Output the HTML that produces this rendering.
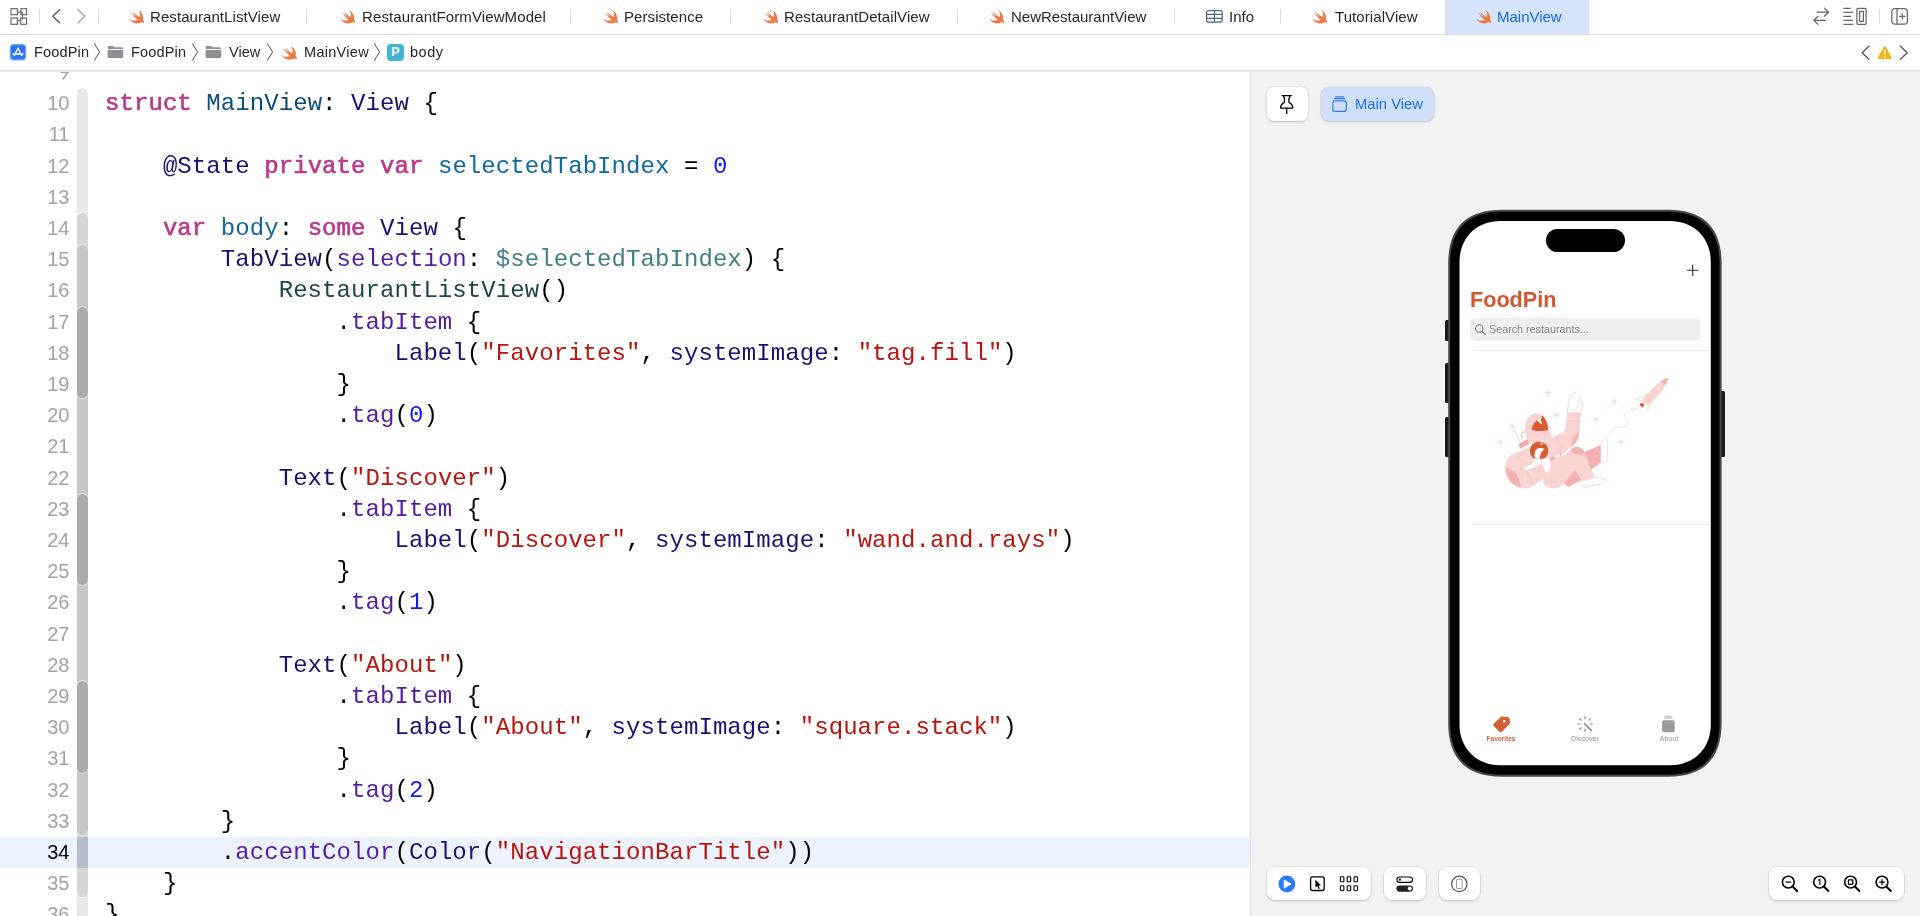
<!DOCTYPE html>
<html>
<head>
<meta charset="utf-8">
<title>Xcode</title>
<style>
*{box-sizing:border-box;margin:0;padding:0}
html,body{width:1920px;height:916px;overflow:hidden;background:#fff;font-family:"Liberation Sans",sans-serif;}
body{position:relative}
.abs{position:absolute}
/* top tab bar */
#tabbar{position:absolute;left:0;top:0;width:1920px;height:34px;background:#fff}
#tabline{position:absolute;left:0;top:34px;width:1920px;height:1px;background:#dcdcdc}
.tab{position:absolute;top:0;height:34px;font-size:15px;line-height:33px;color:#262626;white-space:nowrap}
.tsep{position:absolute;top:9px;width:1px;height:15px;background:#dadada}
.swift{position:absolute;top:9px;width:16px;height:15px}
/* breadcrumb */
#crumb{position:absolute;left:0;top:35px;width:1920px;height:35px;background:#fff}
#crumbline{position:absolute;left:0;top:70px;width:1920px;height:2px;background:linear-gradient(#dedede,#efefef);z-index:3}
.ct{position:absolute;top:35px;height:35px;line-height:35px;font-size:14.5px;color:#262626;white-space:nowrap}
/* editor */
#editor{position:absolute;left:0;top:71px;width:1250px;height:845px;background:#fff;overflow:hidden}
.ln{position:absolute;left:0;width:69.5px;text-align:right;font-size:20px;color:#a3a3a3;height:31.2px;line-height:31.2px;white-space:pre}
.cl{position:absolute;left:105.4px;font-family:"Liberation Mono",monospace;font-size:24px;letter-spacing:0.07px;height:31.2px;line-height:31.2px;white-space:pre;color:#000}
.k{color:#b8388a;-webkit-text-stroke:0.6px #b8388a}
.td{color:#0b4f79}
.ot{color:#1b1270}
.of{color:#561ca0}
.od{color:#0f68a0}
.pv{color:#3e8087}
.pc{color:#1c464a}
.s{color:#b5150d}
.n{color:#1818f2}
#hl{position:absolute;left:0;top:766px;width:1250px;height:31px;background:rgba(40,110,240,0.085)}
.rb{position:absolute;left:77px;width:11px;border-radius:5.5px}
/* preview */
#preview{position:absolute;left:1250px;top:71px;width:670px;height:845px;background:#f2f2f2;border-left:1px solid #e0e0e0}
.btn{position:absolute;background:#fff;border-radius:7px;box-shadow:0 0 0 0.5px rgba(0,0,0,.08),0 1px 2.5px rgba(0,0,0,.18)}
.tl{top:733.2px;height:11px;line-height:11px;font-size:7.2px;text-align:center;white-space:nowrap}
.tab,.ct,.cl,.ln,.tl,#mv,#ttl,#srch{will-change:transform}
</style>
</head>
<body>
<div id="tabbar">
<div class="abs" style="left:1445px;top:0;width:144px;height:34px;background:#d5e4fb"></div>
<svg class="abs" style="left:129.3px;top:9.5px" width="15.5" height="14" viewBox="2.3 3.3 18.6 16.9" preserveAspectRatio="none"><defs><linearGradient id="sg" x1="0" y1="0" x2="0" y2="1"><stop offset="0" stop-color="#f58a3c"/><stop offset="1" stop-color="#ee5a35"/></linearGradient></defs><path fill="#f07642" d="M13.543 3.41c4.114 2.47 6.545 7.162 5.549 11.131-.024.093-.05.181-.076.272l.002.001c2.062 2.538 1.5 5.258 1.236 4.745-1.072-2.086-3.066-1.568-4.088-1.043a6.803 6.803 0 0 1-.281.158l-.02.012-.002.002c-2.115 1.123-4.957 1.205-7.812-.022a12.568 12.568 0 0 1-5.64-4.838c.649.48 1.35.902 2.097 1.252 3.019 1.414 6.051 1.311 8.197-.002C9.651 12.73 7.101 9.67 5.146 7.191a10.628 10.628 0 0 1-1.005-1.384c2.34 2.142 6.038 4.83 7.365 5.576C8.69 8.408 6.208 4.743 6.324 4.86c4.436 4.47 8.528 6.996 8.528 6.996.154.085.27.154.36.213.085-.215.16-.437.224-.668.708-2.588-.09-5.548-1.893-7.992z"/></svg>
<div class="tab" style="left:150px;letter-spacing:0.074px">RestaurantListView</div>
<svg class="abs" style="left:340px;top:9.5px" width="15.5" height="14" viewBox="2.3 3.3 18.6 16.9" preserveAspectRatio="none"><defs><linearGradient id="sg" x1="0" y1="0" x2="0" y2="1"><stop offset="0" stop-color="#f58a3c"/><stop offset="1" stop-color="#ee5a35"/></linearGradient></defs><path fill="#f07642" d="M13.543 3.41c4.114 2.47 6.545 7.162 5.549 11.131-.024.093-.05.181-.076.272l.002.001c2.062 2.538 1.5 5.258 1.236 4.745-1.072-2.086-3.066-1.568-4.088-1.043a6.803 6.803 0 0 1-.281.158l-.02.012-.002.002c-2.115 1.123-4.957 1.205-7.812-.022a12.568 12.568 0 0 1-5.64-4.838c.649.48 1.35.902 2.097 1.252 3.019 1.414 6.051 1.311 8.197-.002C9.651 12.73 7.101 9.67 5.146 7.191a10.628 10.628 0 0 1-1.005-1.384c2.34 2.142 6.038 4.83 7.365 5.576C8.69 8.408 6.208 4.743 6.324 4.86c4.436 4.47 8.528 6.996 8.528 6.996.154.085.27.154.36.213.085-.215.16-.437.224-.668.708-2.588-.09-5.548-1.893-7.992z"/></svg>
<div class="tab" style="left:361.6px;letter-spacing:0.110px">RestaurantFormViewModel</div>
<svg class="abs" style="left:603.3px;top:9.5px" width="15.5" height="14" viewBox="2.3 3.3 18.6 16.9" preserveAspectRatio="none"><defs><linearGradient id="sg" x1="0" y1="0" x2="0" y2="1"><stop offset="0" stop-color="#f58a3c"/><stop offset="1" stop-color="#ee5a35"/></linearGradient></defs><path fill="#f07642" d="M13.543 3.41c4.114 2.47 6.545 7.162 5.549 11.131-.024.093-.05.181-.076.272l.002.001c2.062 2.538 1.5 5.258 1.236 4.745-1.072-2.086-3.066-1.568-4.088-1.043a6.803 6.803 0 0 1-.281.158l-.02.012-.002.002c-2.115 1.123-4.957 1.205-7.812-.022a12.568 12.568 0 0 1-5.64-4.838c.649.48 1.35.902 2.097 1.252 3.019 1.414 6.051 1.311 8.197-.002C9.651 12.73 7.101 9.67 5.146 7.191a10.628 10.628 0 0 1-1.005-1.384c2.34 2.142 6.038 4.83 7.365 5.576C8.69 8.408 6.208 4.743 6.324 4.86c4.436 4.47 8.528 6.996 8.528 6.996.154.085.27.154.36.213.085-.215.16-.437.224-.668.708-2.588-.09-5.548-1.893-7.992z"/></svg>
<div class="tab" style="left:624px;letter-spacing:0.075px">Persistence</div>
<svg class="abs" style="left:762.7px;top:9.5px" width="15.5" height="14" viewBox="2.3 3.3 18.6 16.9" preserveAspectRatio="none"><defs><linearGradient id="sg" x1="0" y1="0" x2="0" y2="1"><stop offset="0" stop-color="#f58a3c"/><stop offset="1" stop-color="#ee5a35"/></linearGradient></defs><path fill="#f07642" d="M13.543 3.41c4.114 2.47 6.545 7.162 5.549 11.131-.024.093-.05.181-.076.272l.002.001c2.062 2.538 1.5 5.258 1.236 4.745-1.072-2.086-3.066-1.568-4.088-1.043a6.803 6.803 0 0 1-.281.158l-.02.012-.002.002c-2.115 1.123-4.957 1.205-7.812-.022a12.568 12.568 0 0 1-5.64-4.838c.649.48 1.35.902 2.097 1.252 3.019 1.414 6.051 1.311 8.197-.002C9.651 12.73 7.101 9.67 5.146 7.191a10.628 10.628 0 0 1-1.005-1.384c2.34 2.142 6.038 4.83 7.365 5.576C8.69 8.408 6.208 4.743 6.324 4.86c4.436 4.47 8.528 6.996 8.528 6.996.154.085.27.154.36.213.085-.215.16-.437.224-.668.708-2.588-.09-5.548-1.893-7.992z"/></svg>
<div class="tab" style="left:784px;letter-spacing:0.086px">RestaurantDetailView</div>
<svg class="abs" style="left:989px;top:9.5px" width="15.5" height="14" viewBox="2.3 3.3 18.6 16.9" preserveAspectRatio="none"><defs><linearGradient id="sg" x1="0" y1="0" x2="0" y2="1"><stop offset="0" stop-color="#f58a3c"/><stop offset="1" stop-color="#ee5a35"/></linearGradient></defs><path fill="#f07642" d="M13.543 3.41c4.114 2.47 6.545 7.162 5.549 11.131-.024.093-.05.181-.076.272l.002.001c2.062 2.538 1.5 5.258 1.236 4.745-1.072-2.086-3.066-1.568-4.088-1.043a6.803 6.803 0 0 1-.281.158l-.02.012-.002.002c-2.115 1.123-4.957 1.205-7.812-.022a12.568 12.568 0 0 1-5.64-4.838c.649.48 1.35.902 2.097 1.252 3.019 1.414 6.051 1.311 8.197-.002C9.651 12.73 7.101 9.67 5.146 7.191a10.628 10.628 0 0 1-1.005-1.384c2.34 2.142 6.038 4.83 7.365 5.576C8.69 8.408 6.208 4.743 6.324 4.86c4.436 4.47 8.528 6.996 8.528 6.996.154.085.27.154.36.213.085-.215.16-.437.224-.668.708-2.588-.09-5.548-1.893-7.992z"/></svg>
<div class="tab" style="left:1010.5px;letter-spacing:-0.019px">NewRestaurantView</div>
<div class="tab" style="left:1229px;letter-spacing:0.042px">Info</div>
<svg class="abs" style="left:1312.3px;top:9.5px" width="15.5" height="14" viewBox="2.3 3.3 18.6 16.9" preserveAspectRatio="none"><defs><linearGradient id="sg" x1="0" y1="0" x2="0" y2="1"><stop offset="0" stop-color="#f58a3c"/><stop offset="1" stop-color="#ee5a35"/></linearGradient></defs><path fill="#f07642" d="M13.543 3.41c4.114 2.47 6.545 7.162 5.549 11.131-.024.093-.05.181-.076.272l.002.001c2.062 2.538 1.5 5.258 1.236 4.745-1.072-2.086-3.066-1.568-4.088-1.043a6.803 6.803 0 0 1-.281.158l-.02.012-.002.002c-2.115 1.123-4.957 1.205-7.812-.022a12.568 12.568 0 0 1-5.64-4.838c.649.48 1.35.902 2.097 1.252 3.019 1.414 6.051 1.311 8.197-.002C9.651 12.73 7.101 9.67 5.146 7.191a10.628 10.628 0 0 1-1.005-1.384c2.34 2.142 6.038 4.83 7.365 5.576C8.69 8.408 6.208 4.743 6.324 4.86c4.436 4.47 8.528 6.996 8.528 6.996.154.085.27.154.36.213.085-.215.16-.437.224-.668.708-2.588-.09-5.548-1.893-7.992z"/></svg>
<div class="tab" style="left:1335px;letter-spacing:0.083px">TutorialView</div>
<svg class="abs" style="left:1476px;top:9.5px" width="15.5" height="14" viewBox="2.3 3.3 18.6 16.9" preserveAspectRatio="none"><defs><linearGradient id="sg" x1="0" y1="0" x2="0" y2="1"><stop offset="0" stop-color="#f58a3c"/><stop offset="1" stop-color="#ee5a35"/></linearGradient></defs><path fill="#f07642" d="M13.543 3.41c4.114 2.47 6.545 7.162 5.549 11.131-.024.093-.05.181-.076.272l.002.001c2.062 2.538 1.5 5.258 1.236 4.745-1.072-2.086-3.066-1.568-4.088-1.043a6.803 6.803 0 0 1-.281.158l-.02.012-.002.002c-2.115 1.123-4.957 1.205-7.812-.022a12.568 12.568 0 0 1-5.64-4.838c.649.48 1.35.902 2.097 1.252 3.019 1.414 6.051 1.311 8.197-.002C9.651 12.73 7.101 9.67 5.146 7.191a10.628 10.628 0 0 1-1.005-1.384c2.34 2.142 6.038 4.83 7.365 5.576C8.69 8.408 6.208 4.743 6.324 4.86c4.436 4.47 8.528 6.996 8.528 6.996.154.085.27.154.36.213.085-.215.16-.437.224-.668.708-2.588-.09-5.548-1.893-7.992z"/></svg>
<div class="tab" style="left:1497px;letter-spacing:-0.009px;color:#1767e0">MainView</div>
<div class="tsep" style="left:39.0px"></div>
<div class="tsep" style="left:97.9px"></div>
<div class="tsep" style="left:306.2px"></div>
<div class="tsep" style="left:570.2px"></div>
<div class="tsep" style="left:730.2px"></div>
<div class="tsep" style="left:956.5px"></div>
<div class="tsep" style="left:1174.2px"></div>
<div class="tsep" style="left:1279.5px"></div>
<div class="tsep" style="left:1878.5px"></div>
<svg class="abs" style="left:9px;top:7px" width="20" height="20" viewBox="9 7 20 20" fill="none" stroke="#6a6a6a" stroke-width="1.2"><rect x="11" y="8.7" width="6.4" height="6"/><rect x="20.8" y="8.7" width="5.7" height="6"/><rect x="11" y="18" width="6.4" height="6.3"/><rect x="20.8" y="18" width="5.7" height="6.3"/><path d="M17.4 12.2H22.5M22.5 12.2V19.5M17.4 20.3H20.8"/></svg>
<svg class="abs" style="left:50px;top:7px" width="40" height="20" viewBox="50 7 40 20" fill="none" stroke-width="1.5" stroke-linecap="round" stroke-linejoin="round"><path stroke="#5e5e5e" d="M59.6 9.8L52.8 16.2L59.6 22.7"/><path stroke="#a8a8a8" d="M78 9.8L84.8 16.2L78 22.7"/></svg>
<svg class="abs" style="left:1205px;top:8px" width="19" height="17" viewBox="1205 8 19 17" fill="none" stroke="#56657a" stroke-width="1.2"><rect x="1206.6" y="10.6" width="15.6" height="11.6" rx="2"/><path d="M1206.6 14.4H1222.2M1206.6 18.3H1222.2M1214.4 10.6V22.2"/></svg>
<svg class="abs" style="left:1810px;top:5px" width="104" height="24" viewBox="1810 5 104 24" fill="none" stroke="#666" stroke-width="1.25" stroke-linecap="round" stroke-linejoin="round">
<path d="M1817 12.2H1828.4M1824.3 8.1L1828.6 12.2L1824.3 16.3M1825.3 20.3H1814M1818 16.2L1813.8 20.3L1818 24.4"/>
<path d="M1843.4 8.4H1850.6M1843.4 12.3H1853.2M1843.4 16.4H1851M1843.4 20.4H1853.2M1843.4 24.3H1853.2" stroke-linecap="butt"/>
<rect x="1856.9" y="8.4" width="9.2" height="15.9" rx="1"/><rect x="1859.6" y="11.3" width="3.8" height="10" />
<rect x="1891.8" y="8.5" width="15.6" height="15.6" rx="3.2"/><path d="M1897 8.5V24.1M1899.6 16.4H1905M1902.3 13.7V19.1"/></svg>
</div>
<div id="tabline"></div>
<div id="crumb"></div>
<div id="crumbline"></div>
<!--CRUMB-->
<svg class="abs" style="left:9px;top:43px" width="18" height="18" viewBox="0 0 18 18"><rect x="0.8" y="1" width="16.4" height="16.4" rx="3.8" fill="#74a6ff"/><rect x="2" y="2.2" width="14" height="14" rx="2.6" fill="#2a74f2"/><g stroke="#fff" stroke-width="1.3" stroke-linecap="round" fill="none"><path d="M9 5.2L5.2 12.6M9 5.2L12.8 12.6M4 11H14"/></g></svg>
<div class="ct" style="left:33.8px;letter-spacing:0.169px">FoodPin</div>
<div class="ct" style="left:130.8px;letter-spacing:0.169px">FoodPin</div>
<div class="ct" style="left:229px;letter-spacing:0.007px">View</div>
<div class="ct" style="left:303.6px;letter-spacing:0.299px">MainView</div>
<div class="ct" style="left:410px;letter-spacing:0.538px">body</div>
<svg class="abs" style="left:93px;top:42px" width="9" height="20" viewBox="0 0 9 20" fill="none" stroke="#4c4c4c" stroke-width="1"><path d="M1.2 1.4L6.6 10L1.2 18.6"/></svg>
<svg class="abs" style="left:191px;top:42px" width="9" height="20" viewBox="0 0 9 20" fill="none" stroke="#4c4c4c" stroke-width="1"><path d="M1.2 1.4L6.6 10L1.2 18.6"/></svg>
<svg class="abs" style="left:266px;top:42px" width="9" height="20" viewBox="0 0 9 20" fill="none" stroke="#4c4c4c" stroke-width="1"><path d="M1.2 1.4L6.6 10L1.2 18.6"/></svg>
<svg class="abs" style="left:373px;top:42px" width="9" height="20" viewBox="0 0 9 20" fill="none" stroke="#4c4c4c" stroke-width="1"><path d="M1.2 1.4L6.6 10L1.2 18.6"/></svg>
<svg class="abs" style="left:107.3px;top:45px" width="17" height="14" viewBox="0 0 17 14"><path fill="#8c9095" d="M0.6 2.2Q0.6 0.9 1.9 0.9H5.6Q6.3 0.9 6.8 1.5L7.4 2.2H14.6Q16.2 2.2 16.2 3.7V4H0.6Z"/><path fill="#8c9095" d="M0.6 4.9H16.2V11.4Q16.2 13 14.6 13H2.2Q0.6 13 0.6 11.4Z"/></svg>
<svg class="abs" style="left:205px;top:45px" width="17" height="14" viewBox="0 0 17 14"><path fill="#8c9095" d="M0.6 2.2Q0.6 0.9 1.9 0.9H5.6Q6.3 0.9 6.8 1.5L7.4 2.2H14.6Q16.2 2.2 16.2 3.7V4H0.6Z"/><path fill="#8c9095" d="M0.6 4.9H16.2V11.4Q16.2 13 14.6 13H2.2Q0.6 13 0.6 11.4Z"/></svg>
<svg class="abs" style="left:280.8px;top:45.6px" width="16.2" height="14.2" viewBox="2.3 3.3 18.6 16.9" preserveAspectRatio="none"><defs><linearGradient id="sg" x1="0" y1="0" x2="0" y2="1"><stop offset="0" stop-color="#f58a3c"/><stop offset="1" stop-color="#ee5a35"/></linearGradient></defs><path fill="#f07642" d="M13.543 3.41c4.114 2.47 6.545 7.162 5.549 11.131-.024.093-.05.181-.076.272l.002.001c2.062 2.538 1.5 5.258 1.236 4.745-1.072-2.086-3.066-1.568-4.088-1.043a6.803 6.803 0 0 1-.281.158l-.02.012-.002.002c-2.115 1.123-4.957 1.205-7.812-.022a12.568 12.568 0 0 1-5.64-4.838c.649.48 1.35.902 2.097 1.252 3.019 1.414 6.051 1.311 8.197-.002C9.651 12.73 7.101 9.67 5.146 7.191a10.628 10.628 0 0 1-1.005-1.384c2.34 2.142 6.038 4.83 7.365 5.576C8.69 8.408 6.208 4.743 6.324 4.86c4.436 4.47 8.528 6.996 8.528 6.996.154.085.27.154.36.213.085-.215.16-.437.224-.668.708-2.588-.09-5.548-1.893-7.992z"/></svg>
<div class="abs" style="left:387px;top:44px;width:17px;height:17px;border-radius:4px;background:#43b3d4;color:#fff;font-size:12.5px;font-weight:bold;line-height:17px;text-align:center">P</div>
<svg class="abs" style="left:1858px;top:42px" width="54" height="22" viewBox="1858 42 54 22" fill="none" stroke="#5a5a5a" stroke-width="1.4" stroke-linecap="round" stroke-linejoin="round"><path d="M1868.8 46.3L1862.2 52.7L1868.8 59.2M1900.5 46.3L1907.2 52.7L1900.5 59.2"/><path d="M1884.8 47.4L1890.6 57.9H1879Z" fill="#f2b310" stroke="#f2b310" stroke-width="2.2"/><path d="M1884.8 50V54.6" stroke="#fff" stroke-width="1.5" stroke-linecap="butt"/><circle cx="1884.8" cy="56.8" r="0.85" fill="#fff" stroke="none"/></svg>
<!--/CRUMB-->
<div id="editor">
<div class="rb" style="top:16.8px;height:880.9px;background:#e9e9e9;box-shadow:0 0 0 1px rgba(255,255,255,.55)"></div>
<div class="rb" style="top:142.3px;height:684.2px;background:#d6d6d6;box-shadow:0 0 0 1px rgba(255,255,255,.55)"></div>
<div class="rb" style="top:173.5px;height:590.6px;background:#c6c6c6;box-shadow:0 0 0 1px rgba(255,255,255,.55)"></div>
<div class="rb" style="top:235.9px;height:91.4px;background:#ababab;box-shadow:0 0 0 1px rgba(255,255,255,.55)"></div>
<div class="rb" style="top:423.1px;height:91.4px;background:#ababab;box-shadow:0 0 0 1px rgba(255,255,255,.55)"></div>
<div class="rb" style="top:610.3px;height:91.4px;background:#ababab;box-shadow:0 0 0 1px rgba(255,255,255,.55)"></div>
<div class="abs" style="left:77px;width:11px;top:766.0px;height:30.8px;background:rgba(0,0,0,0.07)"></div>
<div id="hl" style="top:766.0px;height:30.8px"></div>
<svg class="abs" style="left:58px;top:0px" width="14" height="10" viewBox="58 71 14 10" fill="none" stroke="#a3a3a3" stroke-width="1.5" stroke-linecap="round" stroke-linejoin="round"><path d="M61 72.3H67.8L63 79"/></svg>
<div class="ln" style="top:17.2px">10</div>
<div class="cl" style="top:17.2px"><span class="k">struct</span> <span class="td">MainView</span>: <span class="ot">View</span> {</div>
<div class="ln" style="top:48.4px">11</div>
<div class="ln" style="top:79.6px">12</div>
<div class="cl" style="top:79.6px">    <span class="ot">@State</span> <span class="k">private</span> <span class="k">var</span> <span class="od">selectedTabIndex</span> = <span class="n">0</span></div>
<div class="ln" style="top:110.8px">13</div>
<div class="ln" style="top:142.0px">14</div>
<div class="cl" style="top:142.0px">    <span class="k">var</span> <span class="od">body</span>: <span class="k">some</span> <span class="ot">View</span> {</div>
<div class="ln" style="top:173.2px">15</div>
<div class="cl" style="top:173.2px">        <span class="ot">TabView</span>(<span class="of">selection</span>: <span class="pv">$selectedTabIndex</span>) {</div>
<div class="ln" style="top:204.4px">16</div>
<div class="cl" style="top:204.4px">            <span class="pc">RestaurantListView</span>()</div>
<div class="ln" style="top:235.6px">17</div>
<div class="cl" style="top:235.6px">                .<span class="of">tabItem</span> {</div>
<div class="ln" style="top:266.8px">18</div>
<div class="cl" style="top:266.8px">                    <span class="ot">Label</span>(<span class="s">"Favorites"</span>, <span class="ot">systemImage</span>: <span class="s">"tag.fill"</span>)</div>
<div class="ln" style="top:298.0px">19</div>
<div class="cl" style="top:298.0px">                }</div>
<div class="ln" style="top:329.2px">20</div>
<div class="cl" style="top:329.2px">                .<span class="of">tag</span>(<span class="n">0</span>)</div>
<div class="ln" style="top:360.4px">21</div>
<div class="ln" style="top:391.6px">22</div>
<div class="cl" style="top:391.6px">            <span class="ot">Text</span>(<span class="s">"Discover"</span>)</div>
<div class="ln" style="top:422.8px">23</div>
<div class="cl" style="top:422.8px">                .<span class="of">tabItem</span> {</div>
<div class="ln" style="top:454.0px">24</div>
<div class="cl" style="top:454.0px">                    <span class="ot">Label</span>(<span class="s">"Discover"</span>, <span class="ot">systemImage</span>: <span class="s">"wand.and.rays"</span>)</div>
<div class="ln" style="top:485.2px">25</div>
<div class="cl" style="top:485.2px">                }</div>
<div class="ln" style="top:516.4px">26</div>
<div class="cl" style="top:516.4px">                .<span class="of">tag</span>(<span class="n">1</span>)</div>
<div class="ln" style="top:547.6px">27</div>
<div class="ln" style="top:578.8px">28</div>
<div class="cl" style="top:578.8px">            <span class="ot">Text</span>(<span class="s">"About"</span>)</div>
<div class="ln" style="top:610.0px">29</div>
<div class="cl" style="top:610.0px">                .<span class="of">tabItem</span> {</div>
<div class="ln" style="top:641.2px">30</div>
<div class="cl" style="top:641.2px">                    <span class="ot">Label</span>(<span class="s">"About"</span>, <span class="ot">systemImage</span>: <span class="s">"square.stack"</span>)</div>
<div class="ln" style="top:672.4px">31</div>
<div class="cl" style="top:672.4px">                }</div>
<div class="ln" style="top:703.6px">32</div>
<div class="cl" style="top:703.6px">                .<span class="of">tag</span>(<span class="n">2</span>)</div>
<div class="ln" style="top:734.8px">33</div>
<div class="cl" style="top:734.8px">        }</div>
<div class="ln" style="top:766.0px;color:#000">34</div>
<div class="cl" style="top:766.0px">        .<span class="of">accentColor</span>(<span class="ot">Color</span>(<span class="s">"NavigationBarTitle"</span>))</div>
<div class="ln" style="top:797.2px">35</div>
<div class="cl" style="top:797.2px">    }</div>
<div class="ln" style="top:828.4px">36</div>
<div class="cl" style="top:828.4px">}</div>
</div>
<div id="preview"></div>
<!--PV-->
<div class="btn" style="left:1266.7px;top:86.8px;width:41px;height:34.2px"></div>
<svg class="abs" style="left:1276px;top:92px" width="22" height="24" viewBox="1276 92 22 24" fill="none" stroke="#000" stroke-width="1.3" stroke-linejoin="round" stroke-linecap="round"><path d="M1282 95.6H1291.4M1283.4 95.6C1284.6 98 1284.8 100 1284.4 102.4C1282.4 103.4 1280.6 105.2 1280.6 108.1H1292.8C1292.8 105.2 1291 103.4 1289 102.4C1288.6 100 1288.8 98 1290 95.6M1286.7 108.1V113.4"/></svg>
<div class="btn" style="left:1320.8px;top:86.8px;width:113.6px;height:34.2px;background:#cfdffa;border-radius:8px"></div>
<svg class="abs" style="left:1330px;top:94px" width="20" height="20" viewBox="1330 94 20 20" fill="none" stroke="#2f7bf6" stroke-width="1.2" stroke-linecap="round"><path d="M1335.6 96.8H1343.6M1334.4 98.7H1344.8"/><rect x="1332.9" y="100.8" width="13.4" height="10.6" rx="2.2"/></svg>
<div class="abs" id="mv" style="left:1355px;top:86.8px;height:34.2px;line-height:34.6px;font-size:14.8px;color:#1c6ef2;white-space:nowrap">Main View</div>
<div class="btn" style="left:1266.9px;top:866.5px;width:103.7px;height:33.8px;border-radius:8px"></div>
<div class="btn" style="left:1384px;top:866.5px;width:41.9px;height:33.8px;border-radius:8px"></div>
<div class="btn" style="left:1439px;top:866.5px;width:41.3px;height:33.8px;border-radius:8px"></div>
<div class="btn" style="left:1768.8px;top:866.5px;width:135.6px;height:33.8px;border-radius:8px"></div>
<svg class="abs" style="left:1266px;top:866px" width="220" height="36" viewBox="1266 866 220 36" fill="none" stroke="#000" stroke-width="1.3">
<circle cx="1286.9" cy="884" r="8.4" fill="#2d7af6" stroke="none"/><path d="M1284.2 879.9L1291 884L1284.2 888.1Z" fill="#fff" stroke="#fff" stroke-width="0.8" stroke-linejoin="round"/>
<rect x="1310.6" y="876.9" width="13.6" height="13.6" rx="2"/><path d="M1315.4 879.6V887.6L1317.3 885.9L1318.6 888.9L1319.8 888.4L1318.5 885.4H1321Z" fill="#000" stroke="none"/>
<g stroke-width="1.1"><rect x="1340.4" y="876.8" width="3.5" height="5" rx="0.9"/><rect x="1347.2" y="876.8" width="3.5" height="5" rx="0.9"/><rect x="1354" y="876.8" width="3.5" height="5" rx="0.9"/><rect x="1340.4" y="885.7" width="3.5" height="5" rx="0.9"/><rect x="1347.2" y="885.7" width="3.5" height="5" rx="0.9"/><rect x="1354" y="885.7" width="3.5" height="5" rx="0.9"/></g>
<rect x="1396.9" y="877" width="15.6" height="5.4" rx="2.7" stroke-width="1.1"/><circle cx="1399.9" cy="879.7" r="1.1" fill="#000" stroke="none"/>
<rect x="1396.4" y="885.5" width="16.6" height="6.2" rx="3.1" fill="#222" stroke="none"/><circle cx="1409.8" cy="888.6" r="2" fill="#fff" stroke="none"/>
<circle cx="1459.3" cy="883.9" r="7.7" stroke="#555" stroke-width="1.2"/><rect x="1456.5" y="879.2" width="5.6" height="9.4" rx="1.2" stroke="#8a8a8a" stroke-width="0.9"/>
</svg>
<svg class="abs" style="left:1770px;top:868px" width="134" height="30" viewBox="1770 868 134 30" fill="none" stroke="#000" stroke-width="1.6"><circle cx="1788.3" cy="882.1" r="5.9"/><path d="M1792.6 886.5L1797.1 891" stroke-width="2" stroke-linecap="round"/><path d="M1785.6 882.1H1791" stroke-width="1.2"/><circle cx="1819.6" cy="882.1" r="5.9"/><path d="M1823.8999999999999 886.5L1828.3999999999999 891" stroke-width="2" stroke-linecap="round"/><path d="M1818.2 880.4L1819.9 879.3V885.2" stroke-width="1.1"/><circle cx="1850.6" cy="882.1" r="5.9"/><path d="M1854.8999999999999 886.5L1859.3999999999999 891" stroke-width="2" stroke-linecap="round"/><rect x="1848.4" y="879.9" width="4.4" height="4.4" rx="0.8" stroke-width="1.3"/><circle cx="1882" cy="882.1" r="5.9"/><path d="M1886.3 886.5L1890.8 891" stroke-width="2" stroke-linecap="round"/><path d="M1879.2 882.1H1884.8M1882 879.3V884.9" stroke-width="1.2"/></svg>
<div class="abs" style="left:1444.6px;top:320.3px;width:5px;height:20.3px;background:#1b1b1b;border-radius:1.5px"></div>
<div class="abs" style="left:1444.6px;top:362.6px;width:5px;height:40.6px;background:#1b1b1b;border-radius:1.5px"></div>
<div class="abs" style="left:1444.6px;top:416.7px;width:5px;height:40.6px;background:#1b1b1b;border-radius:1.5px"></div>
<div class="abs" style="left:1720px;top:391.4px;width:5px;height:65.9px;background:#1b1b1b;border-radius:1.5px"></div>
<svg class="abs" style="left:1440px;top:205px" width="290" height="576" viewBox="1440 205 290 576"><path d="M1448.20 263.80C1448.20 227.78 1466.18 209.80 1502.20 209.80H1667.60C1703.62 209.80 1721.60 227.78 1721.60 263.80V722.80C1721.60 758.82 1703.62 776.80 1667.60 776.80H1502.20C1466.18 776.80 1448.20 758.82 1448.20 722.80Z" fill="#484848"/><path d="M1450.20 263.80C1450.20 229.12 1467.52 211.80 1502.20 211.80H1667.60C1702.28 211.80 1719.60 229.12 1719.60 263.80V722.80C1719.60 757.48 1702.28 774.80 1667.60 774.80H1502.20C1467.52 774.80 1450.20 757.48 1450.20 722.80Z" fill="#000"/><path d="M1459.50 262.10C1459.50 237.91 1476.31 221.10 1500.50 221.10H1669.80C1693.99 221.10 1710.80 237.91 1710.80 262.10V724.30C1710.80 748.49 1693.99 765.30 1669.80 765.30H1500.50C1476.31 765.30 1459.50 748.49 1459.50 724.30Z" fill="#fff"/></svg>
<div class="abs" style="left:1545.5px;top:229px;width:79.5px;height:22.8px;border-radius:11.4px;background:#000"></div>
<svg class="abs" style="left:1686px;top:264px" width="13" height="13" viewBox="0 0 13 13" stroke="#333" stroke-width="1.1" fill="none"><path d="M1 6.3H12.4M6.7 0.6V12"/></svg>
<div class="abs" id="ttl" style="left:1470.4px;top:285.9px;height:28px;line-height:28px;font-size:21.6px;font-weight:bold;color:#d0582c;white-space:nowrap">FoodPin</div>
<div class="abs" style="left:1470px;top:317.9px;width:230.2px;height:22.7px;border-radius:5px;background:#efeff0"></div>
<svg class="abs" style="left:1474px;top:323px" width="13" height="13" viewBox="0 0 13 13" fill="none" stroke="#7c7c80" stroke-width="1.1" stroke-linecap="round"><circle cx="5.3" cy="5.5" r="3.7"/><path d="M8.1 8.3L11.3 11.5"/></svg>
<div class="abs" id="srch" style="left:1489.1px;top:317.9px;height:22.7px;line-height:23.6px;font-size:10.75px;color:#86868a;white-space:nowrap">Search restaurants...</div>
<div class="abs" style="left:1472.8px;top:349.6px;width:237.5px;height:1px;background:#ececec"></div>
<div class="abs" style="left:1472.8px;top:523.6px;width:237.5px;height:1px;background:#ececec"></div>
<svg class="abs" style="left:1490px;top:713px" width="190" height="22" viewBox="1490 713 190 22">
<path d="M1502.4 716.4L1508.2 717.2Q1509.3 717.4 1509.5 718.5L1510 722.6Q1510.1 723.5 1509.4 724.2L1501.8 731.8Q1500.7 732.8 1499.6 731.8L1493.7 725.9Q1492.7 724.8 1493.7 723.7L1500.7 716.9Q1501.4 716.3 1502.4 716.4Z" fill="#cf6336"/><circle cx="1504.2" cy="721.3" r="1.2" fill="#fff"/>
<g stroke="#8a8a8a" stroke-width="1.15" stroke-linecap="butt" fill="none"><path d="M1585 716.2V719.2M1585 728.8V731.8M1577.2 724H1580.3M1589.7 724H1592.8M1579.3 718.3L1581.5 720.5M1590.7 718.3L1588.5 720.5M1579.3 729.7L1581.5 727.5"/><path d="M1584.2 723.2L1591.9 730.9" stroke-width="1.45" stroke="#7e7e7e"/></g>
<path d="M1665.3 716.2H1671.5M1664.1 718H1672.7" stroke="#a2a2a2" stroke-width="0.9"/><rect x="1662.1" y="720.2" width="12.6" height="12.1" rx="2" fill="#9b9b9b"/>
</svg>
<div class="abs tl" id="l1" style="left:1461.3px;width:80px;color:#cf6336;font-weight:bold;font-size:6.5px">Favorites</div>
<div class="abs tl" id="l2" style="left:1545px;width:80px;color:#949494">Discover</div>
<div class="abs tl" id="l3" style="left:1628.6px;width:80px;color:#949494">About</div>
<svg class="abs" style="left:1480px;top:360px" width="210" height="150" viewBox="0 0 1282 916">
<g fill="none" stroke="#f3c1bd" stroke-width="4.5" stroke-linecap="round">
<path d="M400 198H430M415 183V213M805 252H835M820 237V267M455 337H480M467 325V350M697 363H720M708 352V375M112 502H138M125 489V515M847 502H875M860 488V516"/>
</g>
<g transform="translate(91.6,152.6) scale(0.7333)">
<g fill="none" stroke="#f3c1bd" stroke-width="6" stroke-linecap="round"><path d="M146 352L205 470"/><circle cx="142" cy="343" r="10" fill="#fff"/><path d="M228 445C212 400 235 380 258 395" stroke-width="9"/></g>
<path d="M195 492L272 450L283 490L210 532Z" fill="#f1aaa8"/>
<path d="M740 560L880 500L890 640L800 705L755 610Z" fill="#f3b0ae"/>
<path d="M545 800L665 700L725 790L610 850Z" fill="#f3b0ae"/>
<path d="M880 500L918 440C930 436 936 444 936 455L934 630L892 660C884 656 880 648 880 640Z" fill="#fff" stroke="#f3c1bd" stroke-width="5"/>
<path d="M130 585L570 395C590 360 596 300 600 234L716 232L702 400C692 465 670 490 640 512L520 600L470 625L440 760L300 850C200 890 90 820 85 700C85 650 100 612 130 585Z" fill="#f9d4d2"/>
<path d="M88 680L180 738L222 852C140 842 92 770 88 680Z" fill="#f3b3b1"/>
<path d="M702 385C700 440 672 492 625 522L652 440Z" fill="#f3b3b1"/>
<path d="M603 232C605 180 615 110 630 85C645 58 692 60 705 90C710 105 708 115 705 125C715 116 731 130 728 152C725 185 718 210 713 232Z" fill="#fff" stroke="#f3c1bd" stroke-width="5"/>
<path d="M668 222L702 128" fill="none" stroke="#f3c1bd" stroke-width="4"/>
<path d="M290 490C238 420 232 300 300 250C360 220 412 250 432 300C452 350 466 400 470 446Z" fill="#f9d4d2"/>
<path d="M395 255C425 290 441 330 441 372C400 388 340 387 304 373C310 338 332 298 395 255Z" fill="#d85a31"/>
<path d="M348 292L390 258L378 298L394 312L386 330Z" fill="#fff"/>
<g fill="none" stroke="#efb5b2" stroke-width="3"><path d="M185 562L320 835M95 690L180 722L335 648M455 420L560 572M500 412L580 550M270 722L312 832M595 296L706 306M282 398C340 425 420 405 447 378"/></g>
<path d="M465 625L545 580C600 515 705 490 742 560L832 770L722 802L665 705C620 770 560 852 500 862C440 868 392 832 400 790L432 748L466 690Z" fill="#f9d4d2"/>
<path d="M625 545C660 498 722 508 746 560C735 592 660 587 625 545Z" fill="#f3b3b1"/>
<path d="M546 582L652 502L630 540L562 592Z" fill="#fff"/>
<path d="M715 802L832 766L916 790C926 805 916 816 900 821L745 852C728 846 720 830 715 802Z" fill="#fff" stroke="#f3c1bd" stroke-width="5"/>
<path d="M452 612L548 566L556 590L462 636Z" fill="#f3b0ae"/>
<path d="M492 592L534 572L544 592L502 612Z" fill="#fff" stroke="#f3c1bd" stroke-width="3"/>
<circle cx="367" cy="548" r="77" fill="#d85a31"/>
<path d="M372 487L400 480L392 500Z" fill="#fff"/>
<path d="M330 556C345 522 385 520 412 533L384 562C378 585 368 600 372 618L332 602C320 590 336 576 330 556Z" fill="#fff"/>
<path d="M380 616L452 610C466 640 470 670 466 692L432 752L386 656Z" fill="#fff" stroke="#f3c1bd" stroke-width="4"/>
<path d="M338 606L300 660L246 680C230 686 234 706 250 709L302 702L388 656L378 618Z" fill="#fff" stroke="#f3c1bd" stroke-width="4"/>
</g>
<g transform="translate(732.6,30.5) scale(0.5335)">
<path d="M435 495C380 510 300 530 282 570C270 610 340 640 320 690C300 730 220 690 170 720C140 740 120 760 105 775" fill="none" stroke="#f3c1bd" stroke-width="7" stroke-linecap="round"/>
<path d="M548 322L410 396L482 410Z" fill="#fff" stroke="#f3c1bd" stroke-width="6" stroke-linejoin="round"/>
<path d="M618 388L540 524L572 438Z" fill="#fff" stroke="#f3c1bd" stroke-width="6" stroke-linejoin="round"/>
<path d="M484 406L560 310C620 240 700 170 777 150C772 215 722 290 662 350L540 470Z" fill="#f9d2d0"/>
<path d="M692 188C720 170 750 158 777 150C774 180 762 205 748 228Z" fill="#f3b3b1"/>
<path d="M470 428L507 450L490 488L453 456Z" fill="#d85a31"/>
<circle cx="668" cy="262" r="22" fill="#fbe6e4"/>
</g>
</svg>
<!--/PV-->
</body>
</html>
